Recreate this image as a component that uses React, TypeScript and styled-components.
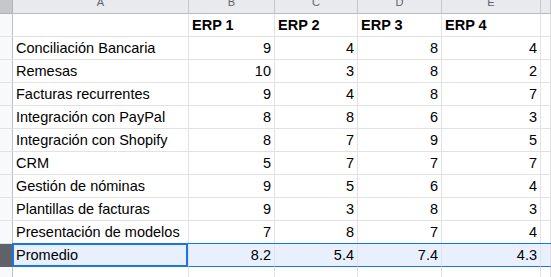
import React from "react";
import styled, { createGlobalStyle, css } from "styled-components";

const Global = createGlobalStyle`
  html, body { margin: 0; padding: 0; background: #fff; overflow: hidden; }
  body { font-family: "Liberation Sans", Arial, sans-serif; }
`;

const Grid = styled.div`
  display: grid;
  grid-template-columns: 13px 176px 86px 83px 84px 99px 1fr;
  grid-template-rows: 14px repeat(12, 23px);
  width: 551px;
  height: 277px;
  overflow: hidden;
`;

const Corner = styled.div`
  box-sizing: border-box;
  background: #c4c7cb;
  border-right: 1px solid #b0b3b8;
  border-bottom: 1px solid #b0b3b8;
`;

const ColHead = styled.div`
  box-sizing: border-box;
  background: #e8eaed;
  border-right: 1px solid #c4c7cb;
  border-bottom: 1px solid #b8bbbf;
  color: #5f6368;
  font-size: 11px;
  line-height: 1;
  display: flex;
  align-items: flex-end;
  justify-content: center;
  padding-bottom: 5px;
  overflow: hidden;
`;

const RowHead = styled.div<{ $active?: boolean }>`
  box-sizing: border-box;
  background: ${(p) => (p.$active ? "#5f6368" : "#f8f9fa")};
  border-right: 1px solid #c0c0c0;
  border-bottom: 1px solid ${(p) => (p.$active ? "#5f6368" : "#e2e2e2")};
`;

const Cell = styled.div<{ $num?: boolean; $bold?: boolean; $sel?: boolean; $active?: boolean }>`
  position: relative;
  box-sizing: border-box;
  border-right: 1px solid #e2e2e2;
  border-bottom: 1px solid #e2e2e2;
  font-size: 14.5px;
  line-height: 17px;
  color: #000;
  font-weight: ${(p) => (p.$bold ? 700 : 400)};
  display: flex;
  align-items: flex-end;
  justify-content: ${(p) => (p.$num ? "flex-end" : "flex-start")};
  padding: 0 3px 2px 3px;
  white-space: nowrap;
  overflow: hidden;
  ${(p) =>
    p.$sel &&
    css`
      background: #e8f0fe;
      border-bottom-color: #1a73e8;
      box-shadow: 0 -1px 0 #1a73e8;
      overflow: visible;
    `}
  ${(p) =>
    p.$active &&
    css`
      &::after {
        content: "";
        position: absolute;
        top: -1px;
        left: -1px;
        right: 0;
        bottom: -1px;
        border: 2px solid #1a73e8;
        pointer-events: none;
      }
    `}
`;

const cols = ["A", "B", "C", "D", "E", ""];

const data: [string, number, number, number, number][] = [
  ["Conciliación Bancaria", 9, 4, 8, 4],
  ["Remesas", 10, 3, 8, 2],
  ["Facturas recurrentes", 9, 4, 8, 7],
  ["Integración con PayPal", 8, 8, 6, 3],
  ["Integración con Shopify", 8, 7, 9, 5],
  ["CRM", 5, 7, 7, 7],
  ["Gestión de nóminas", 9, 5, 6, 4],
  ["Plantillas de facturas", 9, 3, 8, 3],
  ["Presentación de modelos", 7, 8, 7, 4],
];

const avg = (i: number) =>
  (data.reduce((s, r) => s + (r[i] as number), 0) / data.length).toFixed(1);

export default function App() {
  return (
    <>
      <Global />
      <Grid>
        <Corner />
        {cols.map((c, i) => (
          <ColHead key={i}>{c}</ColHead>
        ))}

        <RowHead />
        <Cell />
        {["ERP 1", "ERP 2", "ERP 3", "ERP 4"].map((h) => (
          <Cell key={h} $bold>
            {h}
          </Cell>
        ))}
        <Cell />

        {data.map((r) => (
          <React.Fragment key={r[0]}>
            <RowHead />
            <Cell>{r[0]}</Cell>
            {r.slice(1).map((v, j) => (
              <Cell key={j} $num>
                {v}
              </Cell>
            ))}
            <Cell />
          </React.Fragment>
        ))}

        <RowHead $active />
        <Cell $sel $active>
          Promedio
        </Cell>
        {[1, 2, 3, 4].map((i) => (
          <Cell key={i} $sel $num>
            {avg(i)}
          </Cell>
        ))}
        <Cell $sel />

        <RowHead />
        {cols.map((_, i) => (
          <Cell key={i} />
        ))}
      </Grid>
    </>
  );
}
